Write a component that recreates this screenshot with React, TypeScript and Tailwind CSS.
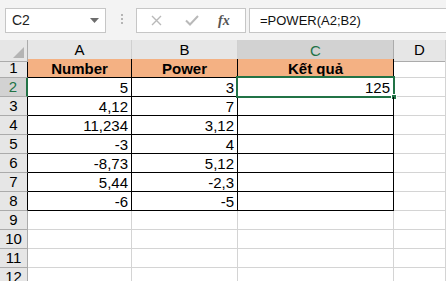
import React from "react";

const rows: { a: string; b: string; c: string }[] = [
  { a: "Number", b: "Power", c: "Kết quả" },
  { a: "5", b: "3", c: "125" },
  { a: "4,12", b: "7", c: "" },
  { a: "11,234", b: "3,12", c: "" },
  { a: "-3", b: "4", c: "" },
  { a: "-8,73", b: "5,12", c: "" },
  { a: "5,44", b: "-2,3", c: "" },
  { a: "-6", b: "-5", c: "" },
];

const cols = ["A", "B", "C", "D"];

function TopBar() {
  return (
    <div className="flex h-[40px] items-start bg-[#f3f3f3] pt-[8px]">
      <div className="ml-[5px] flex h-[25px] w-[101px] items-center justify-between border border-[#c6c6c6] bg-white pl-[6px] pr-[6px] text-[14px] text-[#222]">
        <span>C2</span>
        <svg width="9" height="5" viewBox="0 0 9 5">
          <path d="M0 0h9L4.5 5z" fill="#6d6d6d" />
        </svg>
      </div>
      <div className="ml-[15px] mt-[6px] flex w-[3px] flex-col gap-[2px]">
        <div className="h-[2px] w-[2px] bg-[#b5b5b5]" />
        <div className="h-[2px] w-[2px] bg-[#b5b5b5]" />
        <div className="h-[2px] w-[2px] bg-[#b5b5b5]" />
      </div>
      <div className="ml-[12px] flex h-[25px] w-[110px] items-center border border-[#c6c6c6] bg-white">
        <svg className="ml-[14px]" width="11" height="11" viewBox="0 0 11 11">
          <path d="M1 1l9 9M10 1l-9 9" stroke="#b9b9b9" strokeWidth="1.4" />
        </svg>
        <svg className="ml-[23px]" width="14" height="11" viewBox="0 0 14 11">
          <path d="M1 5.5l4 4L13 1" stroke="#b9b9b9" strokeWidth="2" fill="none" />
        </svg>
        <span
          className="ml-[19px] text-[14px] font-bold italic text-[#555]"
          style={{ fontFamily: '"Liberation Serif", serif' }}
        >
          fx
        </span>
      </div>
      <div className="ml-[3px] flex h-[25px] flex-1 items-center border border-r-0 border-[#c6c6c6] bg-white pl-[10px] text-[13px] text-[#111]">
        =POWER(A2;B2)
      </div>
    </div>
  );
}

function HeaderRow() {
  return (
    <>
      <div className="relative h-[22px] border-b border-r border-[#ababab] bg-[#e6e6e6]">
        <svg className="absolute bottom-[3px] right-[3px]" width="11" height="11" viewBox="0 0 11 11">
          <path d="M11 0v11H0z" fill="#b4b4b4" />
        </svg>
      </div>
      {cols.map((c) => {
        const sel = c === "C";
        return (
          <div
            key={c}
            className={
              sel
                ? "flex h-[22px] items-center justify-center border-b-2 border-r border-b-[#217346] border-r-[#ababab] bg-[#d2d2d2] pt-[2px] text-[15px] text-[#217346]"
                : "flex h-[22px] items-center justify-center border-b border-r border-b-[#ababab] border-r-[#d0d0d0] bg-[#e6e6e6] text-[15px] text-black"
            }
          >
            {c}
          </div>
        );
      })}
    </>
  );
}

export default function App() {
  const empty = [9, 10, 11, 12];
  return (
    <div
      className="h-[281px] w-[446px] overflow-hidden bg-white"
      style={{ fontFamily: '"Liberation Sans", Arial, sans-serif' }}
    >
      <TopBar />
      <div className="grid grid-cols-[28px_104px_106px_156px_1fr] auto-rows-[19px]">
        <HeaderRow />
        {rows.map((r, i) => {
          const n = i + 1;
          const head = i === 0;
          const sel = n === 2;
          const cell =
            "flex h-[19px] items-center border-b border-r border-black px-[3px] text-[15px] leading-none ";
          const fill = head ? "justify-center bg-[#f4b183] font-bold" : "justify-end";
          return (
            <React.Fragment key={n}>
              <div
                className={
                  sel
                    ? "flex h-[19px] items-center justify-center border-b border-r-2 border-b-[#ababab] border-r-[#217346] bg-[#d2d2d2] text-[15px] text-[#217346]"
                    : "flex h-[19px] items-center justify-center border-b border-r border-b-[#ababab] border-r-black bg-[#e6e6e6] text-[15px] text-black"
                }
              >
                {n}
              </div>
              <div className={cell + fill}>{r.a}</div>
              <div className={cell + fill}>{r.b}</div>
              <div className={"relative " + cell + fill}>
                {r.c}
                {sel && (
                  <>
                    <div className="pointer-events-none absolute inset-[-2px] border-2 border-[#217346]" />
                    <div className="absolute bottom-[-4px] right-[-4px] h-[6px] w-[6px] border border-white bg-[#217346]" />
                  </>
                )}
              </div>
              <div className="h-[19px] border-b border-r border-[#d4d4d4]" />
            </React.Fragment>
          );
        })}
        {empty.map((n) => (
          <React.Fragment key={n}>
            <div className="flex h-[19px] items-center justify-center border-b border-r border-[#ababab] bg-[#e6e6e6] text-[15px] text-black">
              {n}
            </div>
            <div className="h-[19px] border-b border-r border-[#d4d4d4]" />
            <div className="h-[19px] border-b border-r border-[#d4d4d4]" />
            <div className="h-[19px] border-b border-r border-[#d4d4d4]" />
            <div className="h-[19px] border-b border-r border-[#d4d4d4]" />
          </React.Fragment>
        ))}
      </div>
    </div>
  );
}
